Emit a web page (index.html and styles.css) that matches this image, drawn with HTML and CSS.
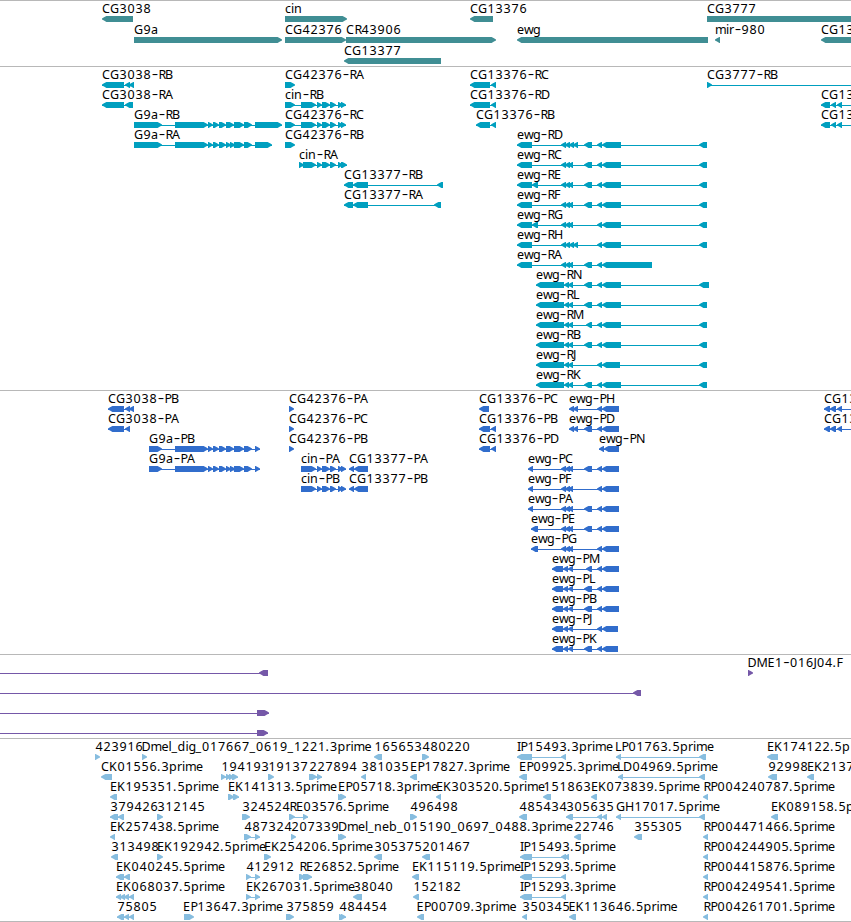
FILE: index.html
```html
<!DOCTYPE html>
<html lang="en">
<head>
    <meta charset="UTF-8">
    <meta name="viewport" content="width=device-width, initial-scale=1.0">
    <title>Genome Browser</title>
    <link rel="stylesheet" href="styles.css">
</head>
<body>
    <div class="browser">
        <section class="track genes" id="genes"></section>
        <section class="track transcripts" id="transcripts"></section>
        <section class="track proteins" id="proteins"></section>
        <section class="track clones" id="clones"></section>
        <section class="track ests" id="ests"></section>
    </div>
    <script src="tracks.js"></script>
</body>
</html>
```

FILE: styles.css
```css
body {
    margin: 0;
    background-color: white;
    overflow: hidden;
}

.browser {
    display: flex;
    flex-direction: column;
    width: 851px;
    border-bottom: 1px solid #b8b8b8;
}

.track {
    box-sizing: border-box;
    border-top: 1px solid #b8b8b8;
    overflow: hidden;
}

.track svg {
    display: block;
    width: 851px;
    height: 100%;
    fill: currentColor;
}

.genes {
    height: 66px;
    color: #408e94;
}

.transcripts {
    height: 324px;
    color: #009fbf;
}

.proteins {
    height: 264px;
    color: #316dcc;
}

.clones {
    height: 84px;
    color: #7558a8;
}

.ests {
    height: 183px;
    color: #87bddf;
}

.line {
    shape-rendering: crispEdges;
}

.label {
    font-family: "Noto Sans", "Open Sans", sans-serif;
    font-size: 12.5px;
    fill: #000;
}

.dash {
    font-size: 20px;
    font-weight: 300;
}
```

FILE: tracks.js
```js
// exon sets shared by several transcripts
const G9A_MID = '175-208 208-213 213-219 219-226 226-234 234-244 244-252';
const G9A_MID2 = '175-208 208-213 213-219 219-226 226-231 230-235 234-244 244-252';
const CIN = '301-316 317-322 322-330 330-336 338-343 341-346';
const E3 = '561-566 565-570 568-573';
const E4 = '561-566 565-570 569-574 573-578';
const M = '584-592';
const END = '597-602 602-621 699-707';
const P_END = '597-602 602-619';

// feature: [row, x, label, strand, exons, line end]
const tracks = {
    genes: { step: 21, features: [
        [0, 102, 'CG3038', '-', '102-133'],
        [0, 285, 'cin', '+', '285-347'],
        [0, 470, 'CG13376', '-', '470-493'],
        [0, 707, 'CG3777', '+', '707-900'],
        [1, 134, 'G9a', '+', '134-282'],
        [1, 285, 'CG42376', '+', '285-346'],
        [1, 346, 'CR43906', '+', '346-496'],
        [1, 517, 'ewg', '-', '517-708'],
        [1, 715, 'mir-980', '-', '715-720'],
        [1, 821, 'CG13', '-', '821-900'],
        [2, 344, 'CG13377', '-', '344-441']
    ] },
    transcripts: { step: 20, features: [
        [0, 102, 'CG3038-RB', '-', '102-124 125-130 129-134'],
        [0, 285, 'CG42376-RA', '+', '285-295'],
        [0, 470, 'CG13376-RC', '-', '470-490 491-496'],
        [0, 707, 'CG3777-RB', '+', '707-712', 851],
        [1, 102, 'CG3038-RA', '-', '102-124 125-133'],
        [1, 285, 'cin-RB', '+', '285-295 ' + CIN],
        [1, 470, 'CG13376-RD', '-', '470-490 491-496'],
        [1, 821, 'CG13', '-', '821-830 831-836 837-842', 851],
        [2, 134, 'G9a-RB', '+', '134-162 ' + G9A_MID + ' 255-282'],
        [2, 285, 'CG42376-RC', '+', '285-295 ' + CIN],
        [2, 476, 'CG13376-RB', '-', '476-490 491-496'],
        [2, 821, 'CG13', '-', '821-830 831-836 837-842', 851],
        [3, 134, 'G9a-RA', '+', '134-162 ' + G9A_MID2 + ' 255-272'],
        [3, 285, 'CG42376-RB', '+', '285-295'],
        [3, 517, 'ewg-RD', '-', `517-532 ${E4} ${M} ${END}`],
        [4, 299, 'cin-RA', '+', '299-304 303-316 317-322 322-330 330-336 338-343 341-347'],
        [4, 517, 'ewg-RC', '-', `517-532 ${E3} ${M} ${END}`],
        [5, 344, 'CG13377-RB', '-', '344-353 353-368 437-443'],
        [5, 517, 'ewg-RE', '-', `517-532 532-538 ${E3} ${M} ${END}`],
        [6, 344, 'CG13377-RA', '-', '344-353 353-368 434-441'],
        [6, 517, 'ewg-RF', '-', `517-532 ${E3} ${M} ${END}`],
        [7, 517, 'ewg-RG', '-', `517-532 532-538 ${E3} ${END}`],
        [8, 517, 'ewg-RH', '-', `517-532 ${E4} ${END}`],
        [9, 517, 'ewg-RA', '-', `517-532 ${E3} ${M} 597-602 602-652`],
        [10, 536, 'ewg-RN', '-', `536-564 564-569 568-573 ${M} 597-602 602-621 699-709`],
        [11, 536, 'ewg-RL', '-', `536-564 564-569 568-573 ${M} ${END}`],
        [12, 536, 'ewg-RM', '-', `536-564 564-569 568-573 586-592 ${END}`],
        [13, 536, 'ewg-RB', '-', `536-564 564-569 568-573 ${M} ${END}`],
        [14, 536, 'ewg-RJ', '-', '536-564 564-569 568-573 597-602 602-620 699-707'],
        [15, 536, 'ewg-RK', '-', `536-564 564-569 568-573 ${M} ${END}`]
    ] },
    proteins: { step: 20, features: [
        [0, 108, 'CG3038-PB', '-', '108-124 125-130 129-134'],
        [0, 289, 'CG42376-PA', '+', '289-294'],
        [0, 479, 'CG13376-PC', '-', '479-489'],
        [0, 569, 'ewg-PH', '-', '569-574 573-578 ' + P_END],
        [0, 824, 'CG13', '-', '824-830 830-836 837-842', 851],
        [1, 108, 'CG3038-PA', '-', '108-124 125-130'],
        [1, 289, 'CG42376-PC', '+', '289-294'],
        [1, 479, 'CG13376-PB', '-', '479-490 491-496'],
        [1, 569, 'ewg-PD', '-', `569-574 573-578 ${M} ${P_END}`],
        [1, 824, 'CG13', '-', '824-830 830-836 837-842', 851],
        [2, 149, 'G9a-PB', '+', '149-162 ' + G9A_MID + ' 255-260'],
        [2, 289, 'CG42376-PB', '+', '289-294'],
        [2, 479, 'CG13376-PD', '-', '479-490 491-496'],
        [2, 599, 'ewg-PN', '-', '599-604 604-619'],
        [3, 149, 'G9a-PA', '+', '149-162 ' + G9A_MID2 + ' 255-260'],
        [3, 301, 'cin-PA', '+', CIN],
        [3, 349, 'CG13377-PA', '-', '349-354 354-368'],
        [3, 528, 'ewg-PC', '-', `528-533 ${E3} ${M} ${P_END}`],
        [4, 301, 'cin-PB', '+', CIN],
        [4, 349, 'CG13377-PB', '-', '349-354 354-368'],
        [4, 528, 'ewg-PF', '-', `528-533 ${E3} ${P_END}`],
        [5, 528, 'ewg-PA', '-', `528-533 ${E3} ${M} ${P_END}`],
        [6, 531, 'ewg-PE', '-', `531-538 ${E3} ${M} ${P_END}`],
        [7, 531, 'ewg-PG', '-', `531-538 ${E3} ${P_END}`],
        [8, 552, 'ewg-PM', '-', `552-563 563-568 568-573 586-592 ${P_END}`],
        [9, 552, 'ewg-PL', '-', `552-563 563-568 568-573 ${M} ${P_END}`],
        [10, 552, 'ewg-PB', '-', `552-563 563-568 568-573 ${M} ${P_END}`],
        [11, 552, 'ewg-PJ', '-', '552-563 563-568 568-573 597-602 602-618'],
        [12, 552, 'ewg-PK', '-', `552-563 563-568 568-573 ${M} 597-602 602-618`]
    ] },
    clones: { step: 20, features: [
        [0, 0, '', '-', '259-268', 0],
        [0, 747.5, 'DME1-016J04.F', '+', '748-753'],
        [1, 0, '', '-', '633-641', 0],
        [2, 0, '', '+', '257-269', 0],
        [3, 0, '', '+', '257-268', 0]
    ] },
    ests: { step: 20, features: [
        [0, 95, '423916', '+', '95-100'],
        [0, 141.5, 'Dmel_dig_017667_0619_1221.3prime', '+', '142-147'],
        [0, 374, '165653', '-', '374-382'],
        [0, 422, '480220', '+', '422-429'],
        [0, 517, 'IP15493.3prime', '-', '517-532 561-566'],
        [0, 615, 'LP01763.5prime', '-', '616-621 699-706'],
        [0, 767, 'EK174122.5p', '-', '767-778'],
        [1, 101, 'CK01556.3prime', '-', '101-112'],
        [1, 221, '194193', '+', '221-226 226-231 229-234 232-238'],
        [1, 268, '19137', '+', '268-274'],
        [1, 309, '227894', '+', '309-317 317-322'],
        [1, 361, '381035', '-', '361-366'],
        [1, 410, 'EP17827.3prime', '-', '410-417'],
        [1, 519, 'EP09925.3prime', '-', '519-527'],
        [1, 617, 'LD04969.5prime', '-', '618-623 699-705'],
        [1, 768, '92998', '-', '768-777'],
        [1, 807, 'EK2137', '-', '807-814'],
        [2, 110, 'EK195351.5prime', '-', '110-117'],
        [2, 228, 'EK141313.5prime', '+', '228-234 233-239'],
        [2, 338, 'EP05718.3prime', '+', '338-343 340-346'],
        [2, 436, 'EK303520.5prime', '-', '436-441'],
        [2, 543, '151863', '-', '543-551'],
        [2, 591, 'EK073839.5prime', '-', '591-597'],
        [2, 703, 'RP004240787.5prime', '-', '703-708'],
        [3, 110, '379426', '-', '110-118 118-124'],
        [3, 157, '312145', '+', '157-163'],
        [3, 242, '324524', '+', '242-250'],
        [3, 289, 'RE03576.5prime', '+', '289-295 303-308'],
        [3, 410, '496498', '+', '410-417'],
        [3, 519, '485434', '-', '519-527'],
        [3, 566, '305635', '-', '566-573 597-602 602-607'],
        [3, 616, 'GH17017.5prime', '-', '616-621 699-705'],
        [3, 771, 'EK089158.5p', '-', '771-778'],
        [4, 110, 'EK257438.5prime', '-', '110-115'],
        [4, 244, '487324', '+', '244-251 255-260'],
        [4, 291, '207339', '+', '291-296'],
        [4, 338, 'Dmel_neb_015190_0697_0488.3prime', '+', '338-343 340-346'],
        [4, 574, '22746', '-', '574-581'],
        [4, 634, '355305', '-', '634-642'],
        [4, 703, 'RP004471466.5prime', '-', '703-708'],
        [5, 111, '313498', '-', '111-118'],
        [5, 157, 'EK192942.5prime', '+', '157-163'],
        [5, 264, 'EK254206.5prime', '+', '264-271'],
        [5, 374, '305375', '-', '374-382'],
        [5, 422, '201467', '-', '422-430'],
        [5, 520, 'IP15493.5prime', '-', '520-532 561-566 564-569'],
        [5, 703, 'RP004244905.5prime', '-', '703-708'],
        [6, 116, 'EK040245.5prime', '-', '116-124 124-130'],
        [6, 246, '412912', '+', '246-251 255-260'],
        [6, 299, 'RE26852.5prime', '+', '299-305 303-312'],
        [6, 412, 'EK115119.5prime', '-', '412-419'],
        [6, 520, 'IP15293.5prime', '-', '520-532 561-566'],
        [6, 703, 'RP004415876.5prime', '-', '703-708'],
        [7, 116, 'EK068037.5prime', '-', '116-121 120-125 124-129 129-134'],
        [7, 246, 'EK267031.5prime', '+', '246-251 255-260'],
        [7, 353, '38040', '-', '353-362'],
        [7, 413, '152182', '-', '413-419'],
        [7, 520, 'IP15293.3prime', '-', '520-532 561-566'],
        [7, 703, 'RP004249541.5prime', '-', '703-708'],
        [8, 117, '75805', '-', '117-124 124-129 129-134'],
        [8, 183, 'EP13647.3prime', '+', '184-194'],
        [8, 286, '375859', '+', '286-294'],
        [8, 339, '484454', '+', '339-344 341-346'],
        [8, 416.5, 'EP00709.3prime', '-', '417-424'],
        [8, 522, '350345', '-', '522-527'],
        [8, 568.5, 'EK113646.5prime', '-', '569-576'],
        [8, 703, 'RP004261701.5prime', '-', '703-708']
    ] }
};

// fixed character advances, digits take 8px
const ADVANCE = {
    A: 9, B: 7, C: 8, D: 9, E: 7, F: 6, G: 9, H: 9, I: 3, J: 3, K: 8, L: 6, M: 11, N: 9, P: 7, R: 7,
    a: 7, b: 8, c: 6, d: 8, e: 7, g: 7, i: 3, l: 3, m: 11, n: 8, p: 8, r: 5, w: 9,
    '-': 7, '_': 6, '.': 4
};

function drawLabel(x, y, text) {
    const xs = [];
    for (const ch of text) {
        let shift = 0;
        if (/\d/.test(ch)) shift = 0.4;
        if (ch === '-') shift = 0.8;
        if (ch === 'R' || ch === 'P') shift = 0.4;
        xs.push(x + shift);
        x += ADVANCE[ch] || 8;
    }
    const content = text.replace(/-(.)/, '<tspan class="dash" dy="1">-</tspan><tspan dy="-1">$1</tspan>');
    return `<text class="label" x="${xs.join(' ')}" y="${y}">${content}</text>`;
}

// box with an arrow head on the strand side
function drawExon(a, b, y, strand) {
    const left = strand === '-';
    const tip = left ? a : b;
    const back = left ? b : a;
    const d = left ? 1 : -1;
    return `M${tip} ${y + 2.4}L${tip + 2 * d} ${y + 1.2}L${tip + 4.4 * d} ${y}H${back}V${y + 6}` +
        `H${tip + 4.4 * d}L${tip + 2 * d} ${y + 4.6}L${tip} ${y + 3.6}Z`;
}

for (const id in tracks) {
    const { step, features } = tracks[id];
    let svg = '';
    for (const [row, x, label, strand, exons, lineEnd] of features) {
        const top = row * step - 1;
        const parts = exons.split(' ').map(e => e.split('-').map(Number));
        let start = parts[0][0];
        let end = parts[parts.length - 1][1];
        if (lineEnd !== undefined) {
            start = Math.min(start, lineEnd);
            end = Math.max(end, lineEnd);
        }
        if (parts.length > 1 || lineEnd !== undefined) {
            svg += `<rect class="line" x="${start}" y="${top + 19}" width="${end - start}" height="1"/>`;
        }
        svg += `<path d="${parts.map(p => drawExon(p[0], p[1], top + 16, strand)).join('')}"/>`;
        if (label) svg += drawLabel(x, top + 13, label);
    }
    document.getElementById(id).innerHTML = `<svg>${svg}</svg>`;
}
```
